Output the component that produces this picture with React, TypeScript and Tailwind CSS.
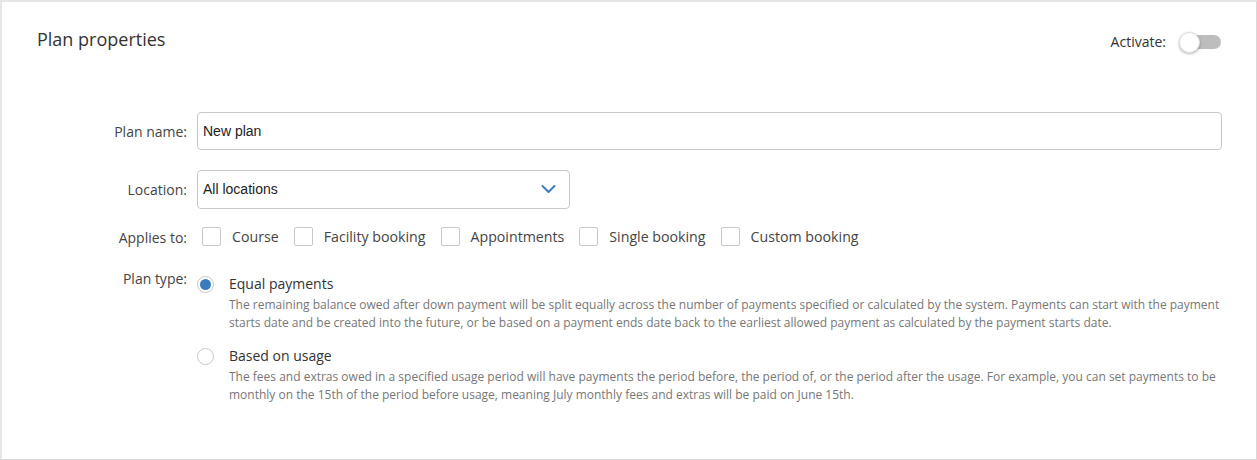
import { useState } from "react";

const appliesTo = ["Course", "Facility booking", "Appointments", "Single booking", "Custom booking"];

const planTypes = [
  {
    id: "equal",
    title: "Equal payments",
    description:
      "The remaining balance owed after down payment will be split equally across the number of payments specified or calculated by the system. Payments can start with the payment starts date and be created into the future, or be based on a payment ends date back to the earliest allowed payment as calculated by the payment starts date.",
  },
  {
    id: "usage",
    title: "Based on usage",
    description:
      "The fees and extras owed in a specified usage period will have payments the period before, the period of, or the period after the usage. For example, you can set payments to be monthly on the 15th of the period before usage, meaning July monthly fees and extras will be paid on June 15th.",
  },
];

export default function App() {
  const [planType, setPlanType] = useState("equal");
  const [active, setActive] = useState(false);
  const [checked, setChecked] = useState<string[]>([]);

  const toggle = (name: string) =>
    setChecked((c) => (c.includes(name) ? c.filter((x) => x !== name) : [...c, name]));

  return (
    <div className="h-[460px] w-[1257px] bg-white font-['Open_Sans',sans-serif] text-[14px] text-[#444]">
      <div className="h-full border-2 border-[#e6e6e6] border-r border-b border-r-[#d9d9d9] border-b-[#d9d9d9] pl-[35px] pr-[34px]">
        {/* Header */}
        <div className="flex items-start justify-between pt-[25px]">
          <h2 className="text-[18px] leading-[24px] text-[#333]">Plan properties</h2>
          <div className="mt-[4px] flex items-center gap-[13px]">
            <span className="text-[14px] text-[#333]">Activate:</span>
            <button
              onClick={() => setActive(!active)}
              className="relative h-[20px] w-[43px]"
            >
              <span
                className={`absolute left-[9px] top-[3px] h-[14px] w-[33px] rounded-full ${
                  active ? "bg-[#8fb8de]" : "bg-[#bdbdbd]"
                }`}
              />
              <span
                className={`absolute top-0 h-[21px] w-[21px] rounded-full border border-[#e0e0e0] bg-white shadow-[0_1px_3px_rgba(0,0,0,0.3)] ${
                  active ? "left-[22px] bg-[#3a7bbf]" : "left-0"
                }`}
              />
            </button>
          </div>
        </div>

        {/* Form */}
        <div className="mt-[60px] grid grid-cols-[150px_1fr] items-center gap-x-[10px]">
          <label className="text-right">Plan name:</label>
          <input
            defaultValue="New plan"
            className="h-[38px] rounded-[4px] border border-[#c8c8c8] px-[5px] font-['Liberation_Sans',Arial,sans-serif] text-[14px] text-[#222] outline-none"
          />

          <label className="mt-[20px] text-right">Location:</label>
          <div className="relative mt-[20px] h-[39px] w-[373px] rounded-[4px] border border-[#c8c8c8]">
            <span className="absolute left-[5px] top-[8px] font-['Liberation_Sans',Arial,sans-serif] text-[14px] text-[#222]">
              All locations
            </span>
            <svg
              className="absolute right-[13px] top-[13px]"
              width="15"
              height="10"
              viewBox="0 0 15 10"
              fill="none"
            >
              <path d="M1.5 2l6 6 6-6" stroke="#3a7bbf" strokeWidth="2" strokeLinecap="round" strokeLinejoin="round" />
            </svg>
          </div>

          <label className="mt-[8px] text-right">Applies to:</label>
          <div className="mt-[8px] flex h-[40px] items-center pl-[5px]">
            {appliesTo.map((name) => (
              <label key={name} className="mr-[15px] flex cursor-pointer items-center">
                <span
                  onClick={() => toggle(name)}
                  className={`h-[19px] w-[19px] rounded-[2px] border border-[#c8c8c8] ${
                    checked.includes(name) ? "bg-[#3a7bbf]" : "bg-white"
                  }`}
                />
                <span className="ml-[11px] text-[14.2px] text-[#444]">{name}</span>
              </label>
            ))}
          </div>

          <label className="mt-[12px] self-start leading-[20px] text-right">Plan type:</label>
          <div className="mt-[17px] flex flex-col gap-[14px]">
            {planTypes.map((p) => (
              <div key={p.id} className="flex cursor-pointer items-start" onClick={() => setPlanType(p.id)}>
                <span className="mt-[2px] flex h-[17px] w-[17px] shrink-0 items-center justify-center rounded-full border border-[#c8c8c8] bg-white">
                  {planType === p.id && <span className="h-[11px] w-[11px] rounded-full bg-[#3a7bbf]" />}
                </span>
                <div className="ml-[15px]">
                  <div className="text-[14px] leading-[20px] text-[#333]">{p.title}</div>
                  <p className="mt-[2px] text-[12px] leading-[18px] text-[#777]">{p.description}</p>
                </div>
              </div>
            ))}
          </div>
        </div>
      </div>
    </div>
  );
}
